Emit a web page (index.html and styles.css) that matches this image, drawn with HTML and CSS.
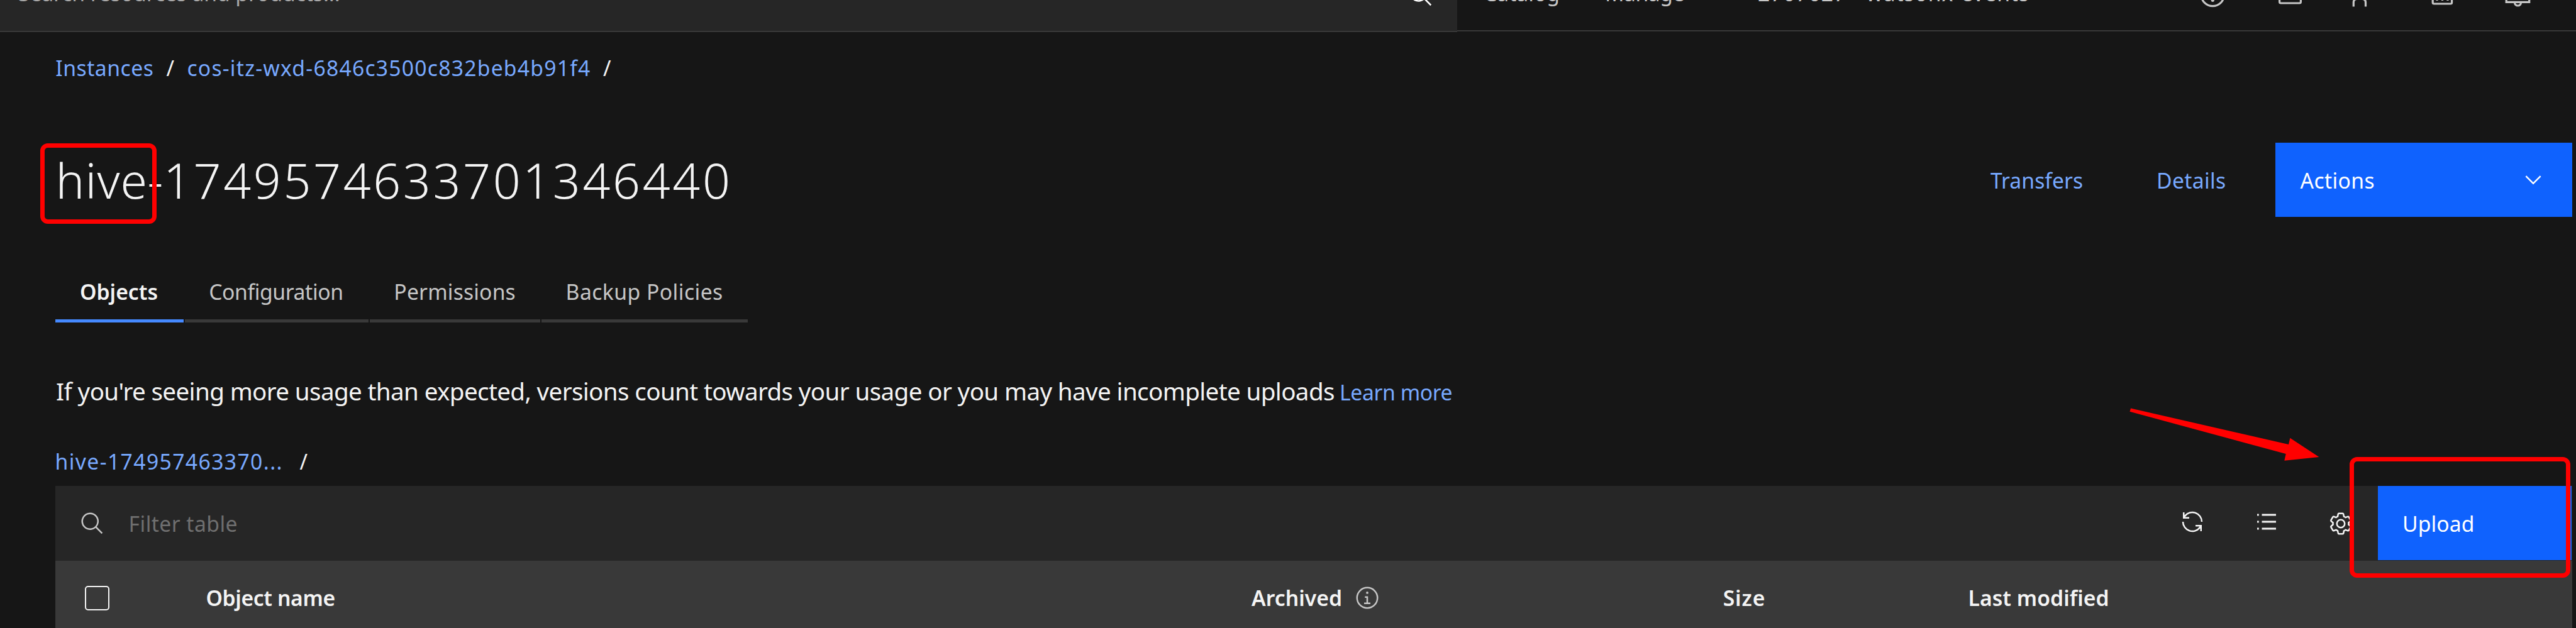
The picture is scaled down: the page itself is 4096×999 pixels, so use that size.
FILE: index.html
```html
<!DOCTYPE html>
<html lang="en">
<head>
<meta charset="utf-8">
<title>Bucket objects</title>
<link rel="stylesheet" href="styles.css">
</head>
<body>
<header class="topbar">
  <div class="topbar-search">
    <span class="topbar-placeholder">Search resources and products...</span>
    <svg class="topbar-lens" viewBox="0 0 32 32"><path d="M29,27.586l-7.552-7.552a11.018,11.018,0,1,0-1.414,1.414L27.586,29ZM4,13a9,9,0,1,1,9,9A9.01,9.01,0,0,1,4,13Z"/></svg>
  </div>
  <nav class="topbar-nav">
    <span class="nav-catalog">Catalog</span>
    <span class="nav-manage">Manage</span>
    <span class="nav-account">2707027 - watsonx-events</span>
    <div class="topbar-icons">
      <svg viewBox="0 -40 122.8 91"><circle cx="61.3" cy="-8.5" r="18.2"/><circle class="solid" cx="61.3" cy="0.3" r="2.6"/></svg>
      <svg viewBox="0 -40 122.8 91"><rect x="44.6" y="-24" width="33.8" height="29" rx="2"/></svg>
      <svg viewBox="0 -40 122.8 91"><path d="M39.3 10.4V4q0-5.500 5.500-5.500h8.200q5.500 0 5.500 5.500v6.400"/></svg>
      <svg viewBox="0 -40 122.8 91"><rect x="43.200" y="-26" width="30.400" height="32" rx="2"/><path d="M50 -1v2M58.500 -1v2M67 -1v2"/></svg>
      <svg viewBox="0 -40 122.8 91"><path d="M37.200 -8V3.400H73.700V-8M50.500 4a5 5 0 0 0 10 0"/></svg>
    </div>
  </nav>
</header>

<main class="page">
  <nav class="crumbs">
    <a class="crumb-instances">Instances</a><span class="crumb-sep">/</span><a class="crumb-cos">cos-itz-wxd-6846c3500c832beb4b91f4</a><span>/</span>
  </nav>

  <section class="title-row">
    <h1 class="title"><span class="title-name">hive</span><span class="title-dash">-</span><span class="title-id">1749574633701346440</span></h1>
    <a class="link-transfers">Transfers</a>
    <a class="link-details">Details</a>
    <button class="btn actions"><span>Actions</span>
      <svg class="chevron" viewBox="0 0 32 32"><path d="M16 22L6 12l1.400-1.400 8.600 8.600 8.600-8.600L26 12z"/></svg>
    </button>
  </section>

  <nav class="tabs">
    <a class="tab tab-objects">Objects</a>
    <a class="tab tab-config">Configuration</a>
    <a class="tab tab-perms">Permissions</a>
    <a class="tab tab-backup">Backup Policies</a>
  </nav>

  <p class="notice"><span class="notice-text">If you're seeing more usage than expected, versions count towards your usage or you may have incomplete uploads</span><a class="learn">Learn more</a></p>

  <nav class="path"><a class="path-name">hive-174957463370...</a><span>/</span></nav>

  <section class="table">
    <div class="toolbar">
      <svg class="icon filter-lens" viewBox="0 0 32 32"><path d="M29,27.586l-7.552-7.552a11.018,11.018,0,1,0-1.414,1.414L27.586,29ZM4,13a9,9,0,1,1,9,9A9.01,9.01,0,0,1,4,13Z"/></svg>
      <span class="filter">Filter table</span>
      <div class="tool raised"><svg class="icon" viewBox="0 0 32 32"><path d="M12,10H6.78A11,11,0,0,1,27,16h2A13,13,0,0,0,6,7.68V4H4v8h8ZM20,22h5.22A11,11,0,0,1,5,16H3a13,13,0,0,0,23,8.320V28h2V20H20Z"/></svg></div>
      <div class="tool raised"><svg class="icon" viewBox="0 0 32 32"><path d="M10 6h18v2.400H10zM10 14.800h18v2.400H10zM10 23.600h18V26H10zM4 6h2.200v2.400H4zM4 14.800h2.200v2.400H4zM4 23.600h2.200V26H4z"/></svg></div>
      <div class="tool"><svg class="icon" viewBox="0 0 32 32"><path d="M27,16.76c0-.25,0-.5,0-.76s0-.51,0-.77l1.92-1.68A2,2,0,0,0,29.3,11L26.94,7a2,2,0,0,0-1.73-1,2,2,0,0,0-.64.1l-2.43.82a11.35,11.35,0,0,0-1.31-.75l-.51-2.52a2,2,0,0,0-2-1.61H13.64a2,2,0,0,0-2,1.61l-.51,2.52a11.48,11.48,0,0,0-1.32.75L7.43,6.06A2,2,0,0,0,6.79,6,2,2,0,0,0,5.06,7L2.7,11a2,2,0,0,0,.41,2.51L5,15.24c0,.25,0,.5,0,.76s0,.51,0,.77L3.11,18.45A2,2,0,0,0,2.7,21L5.06,25a2,2,0,0,0,1.73,1,2,2,0,0,0,.64-.1l2.43-.82a11.35,11.35,0,0,0,1.31.75l.51,2.52a2,2,0,0,0,2,1.61h4.72a2,2,0,0,0,2-1.61l.51-2.52a11.48,11.48,0,0,0,1.32-.75l2.42.82a2,2,0,0,0,.64.1,2,2,0,0,0,1.73-1L29.3,21a2,2,0,0,0-.41-2.51ZM25.21,24l-3.43-1.16a8.86,8.86,0,0,1-2.71,1.57L18.36,28H13.64l-.71-3.55a9.36,9.36,0,0,1-2.7-1.57L6.79,24,4.43,20l2.72-2.4a8.9,8.9,0,0,1,0-3.13L4.43,12,6.79,8l3.43,1.16a8.86,8.86,0,0,1,2.71-1.57L13.64,4h4.72l.71,3.55a9.36,9.36,0,0,1,2.7,1.57L25.21,8,27.57,12l-2.72,2.4a8.9,8.9,0,0,1,0,3.13L27.57,20Z"/><path d="M16,22a6,6,0,1,1,6-6A5.94,5.94,0,0,1,16,22Zm0-10a3.91,3.91,0,0,0-4,4,3.91,3.91,0,0,0,4,4,3.91,3.91,0,0,0,4-4A3.91,3.91,0,0,0,16,12Z"/></svg></div>
      <button class="btn upload">Upload</button>
    </div>
    <div class="thead">
      <div class="check-cell"><span class="checkbox"></span></div>
      <div class="col-name">Object name</div>
      <div class="archived"><span class="archived-label">Archived</span><svg class="info" viewBox="0 0 32 32"><path d="M17 22v-8h-4v2h2v6h-3v2h8v-2zM16 8a1.500 1.500 0 1 0 1.500 1.500A1.500 1.500 0 0 0 16 8z"/><path d="M16 30a14 14 0 1 1 14-14 14 14 0 0 1-14 14zm0-26a12 12 0 1 0 12 12A12 12 0 0 0 16 4z"/></svg></div>
      <div class="col-size">Size</div>
      <div class="col-mod">Last modified</div>
    </div>
  </section>
</main>

<div class="mark mark-name"></div>
<div class="mark mark-upload"></div>
<svg class="arrow" viewBox="3380 640 320 100"><polygon points="3388,649.500 3639,707 3641.400,696.700 3687.400,727.100 3632.300,732.800 3634.700,722.100 3386.500,654.800"/></svg>
</body>
</html>
```
FILE: styles.css
```css
* { box-sizing: border-box; }
body {
  margin: 0;
  width: 4096px;
  height: 999px;
  position: relative;
  overflow: hidden;
  background: #161616;
  color: #f4f4f4;
  font: 400 33.7px/44px "Noto Sans", "Liberation Sans", sans-serif;
  white-space: nowrap;
}
svg { display: block; flex: none; fill: currentColor; }
a { color: #78a9ff; }

/* Top bar, scrolled partly out of view */
.topbar { display: flex; height: 51px; align-items: flex-start; }
.topbar-search {
  display: flex;
  width: 2317px;
  height: 51px;
  flex: none;
  padding-left: 29px;
  background: #262626;
  border-bottom: 2px solid #393939;
  color: #a8a8a8;
}
.topbar-placeholder { width: 2210px; margin-top: -33px; letter-spacing: -.1px; }
.topbar-lens { width: 41px; height: 41px; margin-top: -28px; color: #fff; }
.topbar-nav {
  display: flex;
  flex: 1;
  height: 50px;
  border-bottom: 2px solid #393939;
  color: #c6c6c6;
}
.topbar-nav span { margin-top: -33px; }
.nav-catalog { width: 193px; margin-left: 42px; }
.nav-manage { width: 243px; letter-spacing: -.5px; }
.nav-account { width: 662px; letter-spacing: .9px; }
.topbar-icons { display: flex; margin-top: -40px; }
.topbar-icons svg {
  width: 122.8px;
  height: 91px;
  fill: none;
  stroke: #c6c6c6;
  stroke-width: 3.2px;
}
.topbar-icons .solid { fill: #c6c6c6; stroke: none; }

.page { padding: 35px 0 0 87.6px; }

.crumbs { display: flex; height: 44px; margin-left: .7px; }
.crumb-instances { width: 176.3px; letter-spacing: .51px; }
.crumb-sep { width: 32.8px; }
.crumb-cos { width: 661.6px; letter-spacing: 1.23px; }

.title-row { display: flex; align-items: center; height: 118px; margin-top: 97.3px; }
.title {
  display: flex;
  width: 3077.4px;
  margin: 0;
  padding: 1px 0 0 1px;
  font-size: 77px;
  font-weight: 300;
  line-height: 90px;
}
.title-name { width: 146px; letter-spacing: 1px; }
.title-dash { width: 25.4px; }
.title-id { letter-spacing: 3.64px; }
.link-transfers { width: 264px; padding-top: 1px; letter-spacing: .05px; }
.link-details { width: 189px; padding-top: 1px; letter-spacing: .33px; }
.btn {
  display: flex;
  align-items: center;
  margin: 0;
  border: 0;
  background: #0f62fe;
  color: #fff;
  font: inherit;
  text-align: left;
}
.actions {
  width: 472.5px;
  height: 118px;
  justify-content: space-between;
  padding: 1px 42px 0 39.500px;
  letter-spacing: .38px;
}
.chevron { width: 40px; height: 40px; margin-top: -2px; }

.tabs { display: flex; gap: 2.2px; margin-top: 69.5px; }
.tab {
  height: 98.2px;
  padding-left: 39.4px;
  border-bottom: 5px solid #393939;
  color: #c6c6c6;
  line-height: 98px;
}
.tab-objects { width: 204px; color: #f4f4f4; font-weight: 600; border-color: #4589ff; letter-spacing: .01px; }
.tab-config { width: 292px; padding-left: 38.4px; letter-spacing: -.39px; }
.tab-perms { width: 271px; padding-left: 38.4px; letter-spacing: .16px; }
.tab-backup { width: 328px; padding-left: 38.4px; letter-spacing: .45px; }

.notice { display: flex; align-items: baseline; height: 60px; margin: 79px 0 0; line-height: 60px; }
.notice-text { width: 2042px; margin-left: 1.5px; font-size: 38.6px; letter-spacing: -.63px; }
.learn { margin-left: -1px; letter-spacing: -.41px; }

.path { display: flex; height: 44px; margin-top: 60.5px; }
.path-name { width: 389px; letter-spacing: 1.38px; }

.table { width: 4002.7px; margin-top: 16.900px; }
.toolbar { display: flex; align-items: center; height: 118.8px; padding: 0 1.300px 0 39.6px; background: #262626; }
.icon { width: 40px; height: 40px; }
.filter-lens { color: #c6c6c6; }
.filter { flex: 1; margin-left: 37.4px; color: #6f6f6f; letter-spacing: .44px; }
.tool { display: flex; justify-content: center; width: 118px; }
.raised { padding-bottom: 5px; }
.upload {
  width: 308px;
  height: 118px;
  padding: 1px 0 0 39px;
  align-self: flex-start;
  letter-spacing: .08px;
}

.thead {
  display: grid;
  grid-template-columns: 239.8px 1662.6px 749.7px 389.9px 1fr;
  align-items: center;
  height: 118px;
  background: #393939;
  font-weight: 600;
}
.check-cell { padding-left: 47px; }
.checkbox { display: block; width: 39px; height: 39px; border: 2.400px solid #f4f4f4; border-radius: 5px; }
.col-name { letter-spacing: -.37px; }
.archived { display: flex; align-items: center; }
.archived-label { width: 164px; letter-spacing: .05px; }
.info { width: 40px; height: 40px; color: #c6c6c6; }
.col-size { letter-spacing: .88px; }
.col-mod { letter-spacing: .03px; }

/* Annotations laid over the page */
.mark { position: absolute; border: 7.600px solid #f00; border-radius: 12px; }
.mark-name { left: 64px; top: 228px; width: 185px; height: 127.500px; }
.mark-upload { left: 3736px; top: 727.400px; width: 350.500px; height: 191.500px; }
.arrow { position: absolute; left: 3380px; top: 640px; width: 320px; height: 100px; fill: #f00; }
```
